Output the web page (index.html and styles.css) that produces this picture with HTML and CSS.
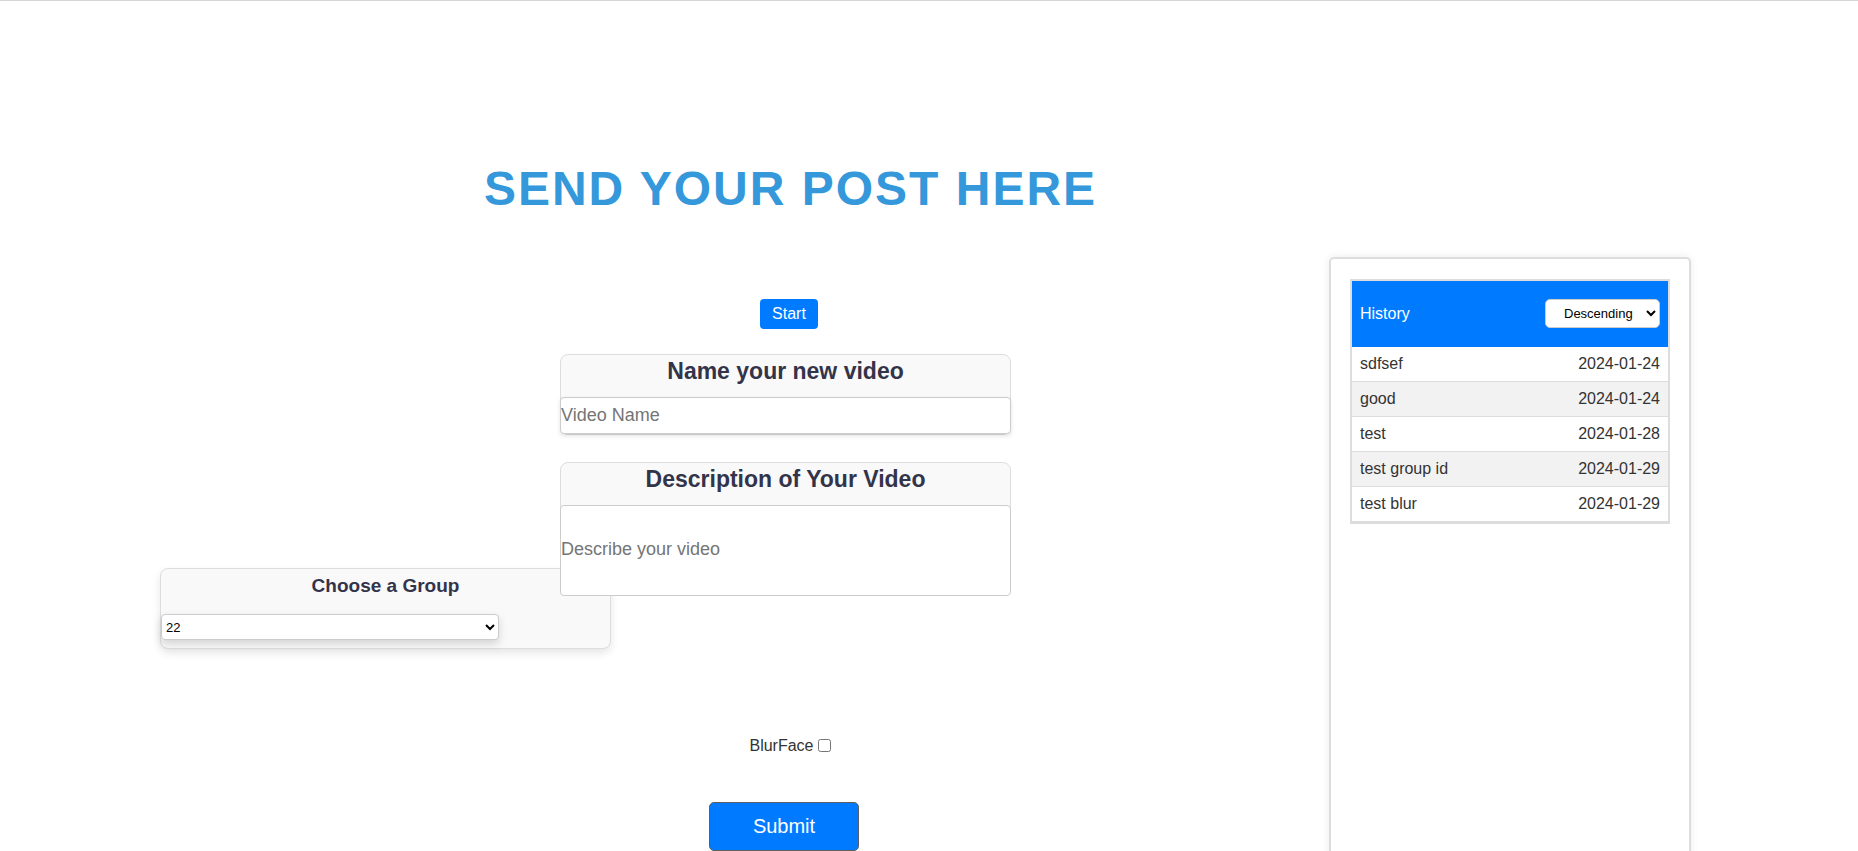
FILE: index.html
```html
<!DOCTYPE html>
<html lang="en">
<head>
<meta charset="utf-8">
<title>Send your post</title>
<link rel="stylesheet" href="styles.css">
</head>
<body>
<div class="page">
  <main class="main">
    <h1 class="title">SEND YOUR POST HERE</h1>
    <button class="start-btn" type="button">Start</button>

    <div class="card card-name">
      <h2 class="card-title">Name your new video</h2>
      <input class="text-input" type="text" placeholder="Video Name">
    </div>

    <div class="card card-desc">
      <h2 class="card-title">Description of Your Video</h2>
      <textarea class="text-area" placeholder="Describe your video"></textarea>
    </div>

    <div class="card card-group">
      <h3 class="group-title">Choose a Group</h3>
      <select class="group-select"><option>22</option></select>
    </div>

    <div class="blur-row"><label class="blur-label" for="blur">BlurFace</label><input class="blur-check" id="blur" type="checkbox"></div>

    <button class="submit-btn" type="button">Submit</button>
  </main>

  <aside class="history-panel">
    <table class="history-table">
      <thead>
        <tr>
          <th class="th-left">History</th>
          <th class="th-right">
            <select class="order-select"><option>Descending</option><option>Ascending</option></select>
          </th>
        </tr>
      </thead>
      <tbody>
        <tr><td>sdfsef</td><td class="date">2024-01-24</td></tr>
        <tr class="alt"><td>good</td><td class="date">2024-01-24</td></tr>
        <tr><td>test</td><td class="date">2024-01-28</td></tr>
        <tr class="alt"><td>test group id</td><td class="date">2024-01-29</td></tr>
        <tr><td>test blur</td><td class="date">2024-01-29</td></tr>
      </tbody>
    </table>
  </aside>
</div>
</body>
</html>
```

FILE: styles.css
```css
html {
  background: #ffffff;
}

::-webkit-scrollbar {
  width: 6px;
}
::-webkit-scrollbar-track {
  background: #f1f1f1;
}
::-webkit-scrollbar-thumb {
  background: #c1c1c1;
  border-left: 2px solid #f1f1f1;
}

body {
  margin: 0;
  font-family: "Liberation Sans", Arial, sans-serif;
  color: #333;
}

.page {
  border-top: 1px solid #d6d6d6;
  display: grid;
  grid-template-columns: 1329px 247px 115px 1fr;
  align-items: start;
}

.main {
  grid-column: 1 / 3;
  grid-row: 1;
  display: flex;
  flex-direction: column;
  align-items: center;
  padding: 160px 0 24px;
}

.title {
  margin: 0 0 0 5px;
  font-size: 48px;
  line-height: 55px;
  font-weight: bold;
  letter-spacing: 2px;
  color: #3498db;
}

.start-btn {
  margin: 83px 0 0 2px;
  height: 30px;
  padding: 0 12px;
  border: none;
  border-radius: 4px;
  background: #007bff;
  color: #fff;
  font-family: inherit;
  font-size: 16px;
  line-height: 30px;
}

.card {
  box-sizing: border-box;
  width: 451px;
  height: 81px;
  border: 1px solid #ddd;
  border-radius: 8px;
  background: #f9f9f9;
  text-align: center;
}

.card-name {
  margin: 25px 5px 0 0;
  padding-top: 2px;
}

.card-desc {
  margin: 27px 5px 0 0;
  padding-top: 2px;
}

.card-title {
  margin: 0 0 12px;
  font-size: 23px;
  line-height: 28px;
  font-weight: bold;
  color: #33344a;
}

.text-input {
  display: block;
  box-sizing: border-box;
  width: calc(100% + 2px);
  height: 37px;
  margin: 0 -1px;
  padding: 0;
  border: 1px solid #ccc;
  border-radius: 4px;
  background: #fff;
  font-family: inherit;
  font-size: 18px;
  color: #333;
  box-shadow: 0 2px 4px rgba(0, 0, 0, 0.12);
}

.text-area {
  position: relative;
  z-index: 1;
  display: block;
  box-sizing: border-box;
  width: calc(100% + 2px);
  height: 91px;
  margin: 0 -1px;
  padding: 33px 0 35px;
  border: 1px solid #ccc;
  border-radius: 4px;
  background: #fff;
  font-family: inherit;
  font-size: 18px;
  color: #333;
  resize: none;
}

.text-input::placeholder,
.text-area::placeholder {
  color: #757575;
}

.card-group {
  align-self: flex-start;
  margin: 25px 0 0 160px;
  padding-top: 5px;
  box-shadow: 0 4px 8px rgba(0, 0, 0, 0.1);
}

.group-title {
  margin: 0;
  font-size: 19px;
  line-height: 23px;
  font-weight: bold;
  color: #33344a;
}

.group-select {
  display: block;
  box-sizing: border-box;
  width: 338px;
  height: 26px;
  margin: 17px 0 0;
  padding: 0 4px 0 0;
  border: 1px solid #ccc;
  border-radius: 4px;
  background: #fff;
  font-family: inherit;
  font-size: 13px;
  color: #000;
  box-shadow: 0 4px 8px rgba(0, 0, 0, 0.15);
}

.blur-row {
  margin: 88px 0 0 4px;
  font-size: 16px;
  line-height: 18px;
  color: #333;
}

.blur-check {
  width: 13px;
  height: 13px;
  margin: 0 0 0 4px;
  vertical-align: -1px;
}

.submit-btn {
  margin: 47px 8px 0 0;
  box-sizing: border-box;
  width: 150px;
  height: 49px;
  padding: 12px 0;
  border: 1px solid #5f5f5f;
  border-radius: 5px;
  background: #007bff;
  color: #fff;
  font-family: inherit;
  font-size: 20px;
  line-height: 23px;
}

.history-panel {
  grid-column: 2 / 4;
  grid-row: 1;
  box-sizing: border-box;
  height: 618px;
  margin-top: 256px;
  padding: 20px 19px;
  border: 2px solid #ddd;
  border-radius: 5px;
  background: #fff;
  box-shadow: 0 0 8px rgba(0, 0, 0, 0.08);
}

.history-table {
  width: 100%;
  border-collapse: separate;
  border-spacing: 0;
  border: 2px solid #ddd;
  font-size: 16px;
}

.history-table th {
  padding: 18px 8px 19px;
  background: #007bff;
  color: #fff;
  font-weight: normal;
  vertical-align: middle;
  line-height: 18px;
}

.th-left {
  text-align: left;
}

.th-right {
  text-align: right;
}

.order-select {
  display: inline-block;
  box-sizing: border-box;
  width: 115px;
  height: 29px;
  padding: 0 4px 0 14px;
  border: 1px solid #ccc;
  border-radius: 5px;
  background: #fff;
  color: #000;
  font-family: inherit;
  font-size: 13px;
  vertical-align: middle;
}

.history-table td {
  padding: 8px;
  line-height: 18px;
  border-bottom: 1px solid #ddd;
  color: #333;
  background: #fff;
}

.history-table tr.alt td {
  background: #f2f2f2;
}

.history-table td.date {
  text-align: right;
}
```
